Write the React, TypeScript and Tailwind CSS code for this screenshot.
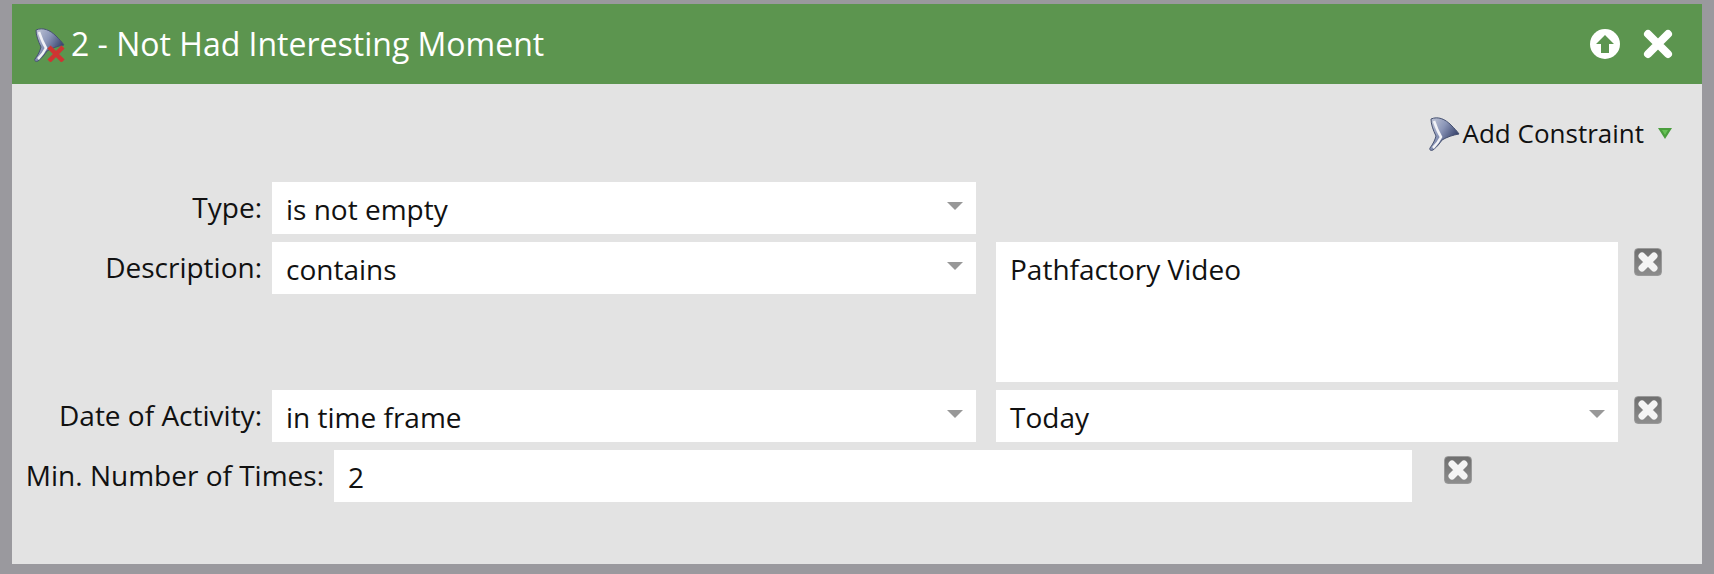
import React from 'react';

const FunnelIcon = ({ crossed }: { crossed?: boolean }) => (
    <svg width="34" height="36" viewBox="0 0 34 36" className="shrink-0 blur-[0.5px]">
        <defs>
            <linearGradient id="funnelFill" x1="0" y1="0" x2="1" y2="0.7">
                <stop offset="0" stopColor="#c4c9d8" />
                <stop offset="0.45" stopColor="#8b96b8" />
                <stop offset="1" stopColor="#1f2b57" />
            </linearGradient>
        </defs>
        <path d="M4 4 C11 1 18 4 24 10 C27 13 30 16 32 19 C26 20 20 22 15 25 C13 28 10 32 6 35 C4 36 2 35 3 33 C6 29 8 25 9 21 C6 15 4 9 4 4 Z" fill="url(#funnelFill)" stroke="#465170" strokeWidth="1" />
        <path d="M7 6 C9 12 11 17 14 22 C12 26 9 30 6 33" stroke="#f1f2f6" strokeWidth="2.5" fill="none" />
        {crossed && <path d="M17 21 L31 35 M31 21 L17 35" stroke="#cf3432" strokeWidth="4.5" fill="none" />}
    </svg>
);

const Arrow = () => (
    <svg width="18" height="10" viewBox="0 0 18 10" className="shrink-0">
        <path d="M1 1 H17 L9 9 Z" fill="#989898" />
    </svg>
);

const RemoveButton = () => (
    <div className="w-[28px] h-[28px] shrink-0 rounded-[4px] bg-gradient-to-b from-[#6f6f6f] to-[#8d8d8d] border border-[#9a9a9a] flex items-center justify-center blur-[0.4px]">
        <svg width="22" height="22" viewBox="0 0 22 22">
            <path d="M5 5 L17 17 M17 5 L5 17" stroke="#f4f4f4" strokeWidth="7" strokeLinecap="round" />
        </svg>
    </div>
);

const Field = ({ children, width, arrow, height = 'h-[52px]' }: { children: React.ReactNode; width: string; arrow?: boolean; height?: string }) => (
    <div className={`${width} ${height} bg-white pl-[14px] pr-[12px] flex justify-between shrink-0`}>
        <span className="text-[28px] leading-[54px] text-[#111]">{children}</span>
        {arrow && <div className="h-[48px] flex items-center"><Arrow /></div>}
    </div>
);

const Label = ({ children, width }: { children: React.ReactNode; width: string }) => (
    <div className={`${width} shrink-0 text-right text-[28px] leading-[50px] text-[#111] pr-[10px]`}>{children}</div>
);

export default function App() {
    return (
        <div className="w-[1714px] h-[574px] bg-[#9a999e] pl-[12px] pr-[12px] pt-[4px] pb-[10px] overflow-hidden font-['Open_Sans','Noto_Sans',sans-serif]">
            <div className="h-[560px] bg-[#e3e3e3]">
                <div className="h-[80px] bg-[#5c954f] flex items-center pl-[20px] pr-[29px]">
                    <FunnelIcon crossed />
                    <div className="ml-[5px] text-[32px] font-medium text-white flex-1">2 - Not Had Interesting Moment</div>
                    <svg width="32" height="32" viewBox="0 0 32 32" className="mr-[22px]">
                        <circle cx="16" cy="16" r="15" fill="#fff" />
                        <path d="M16 7 L25 16 H20 V25 H12 V16 H7 Z" fill="#5c954f" />
                    </svg>
                    <svg width="30" height="30" viewBox="0 0 30 30">
                        <path d="M5 5 L25 25 M25 5 L5 25" stroke="#fff" strokeWidth="8" strokeLinecap="round" />
                    </svg>
                </div>
                <div className="h-[98px] flex items-center justify-end pr-[30px]">
                    <FunnelIcon />
                    <span className="ml-[2px] text-[26px] text-[#111]">Add Constraint</span>
                    <svg width="14" height="12" viewBox="0 0 14 12" className="ml-[14px] blur-[0.4px]">
                        <path d="M0 1 H14 L7 12 Z" fill="#4a9e3d" />
                        <path d="M4 3 H10 L7 8 Z" fill="#66c255" />
                    </svg>
                </div>
                <div className="flex flex-col gap-[8px]">
                    <div className="flex">
                        <Label width="w-[260px]">Type:</Label>
                        <Field width="w-[704px]" arrow>is not empty</Field>
                    </div>
                    <div className="flex">
                        <Label width="w-[260px]">Description:</Label>
                        <Field width="w-[704px]" arrow>contains</Field>
                        <div className="ml-[20px]">
                            <Field width="w-[622px]" height="h-[140px]">Pathfactory Video</Field>
                        </div>
                        <div className="ml-[16px] mt-[6px]"><RemoveButton /></div>
                    </div>
                    <div className="flex">
                        <Label width="w-[260px]">Date of Activity:</Label>
                        <Field width="w-[704px]" arrow>in time frame</Field>
                        <div className="ml-[20px]">
                            <Field width="w-[622px]" arrow>Today</Field>
                        </div>
                        <div className="ml-[16px] mt-[6px]"><RemoveButton /></div>
                    </div>
                    <div className="flex">
                        <Label width="w-[322px]">Min. Number of Times:</Label>
                        <Field width="w-[1078px]">2</Field>
                        <div className="ml-[32px] mt-[6px]"><RemoveButton /></div>
                    </div>
                </div>
            </div>
        </div>
    );
}
